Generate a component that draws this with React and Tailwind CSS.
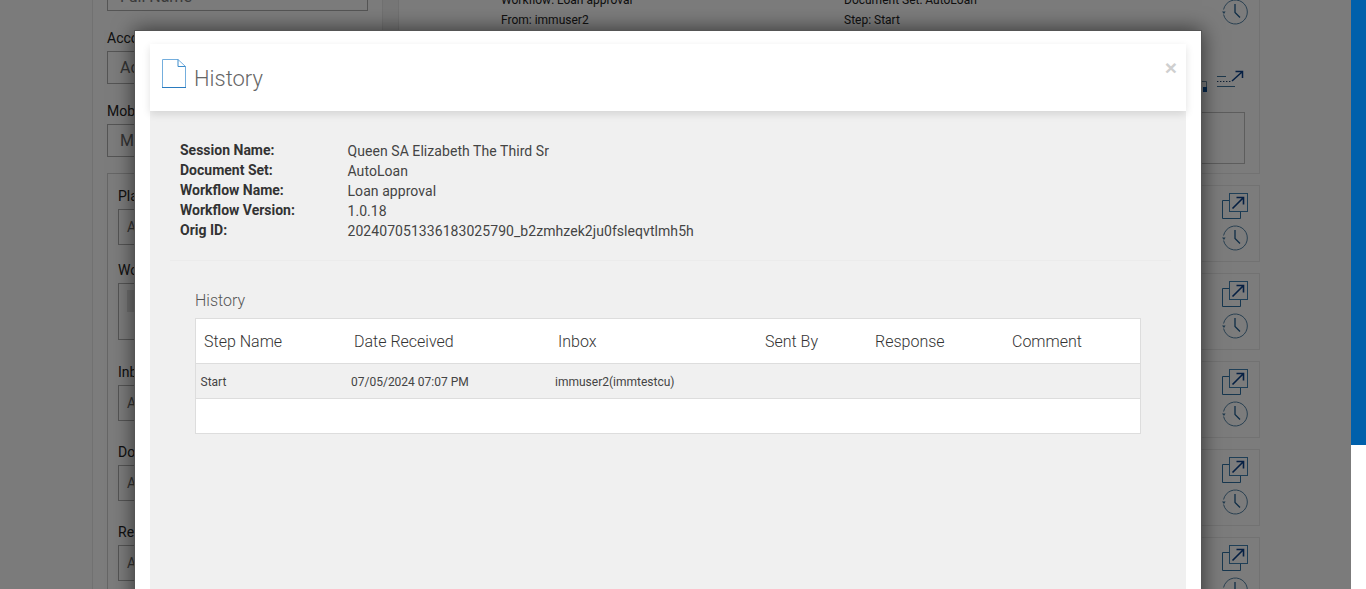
import React from "react";

const roboto = { fontFamily: "Roboto, sans-serif" };

function ExportIcon() {
  return (
    <svg width="26" height="26" viewBox="0 0 26 26" fill="none" className="block">
      <path d="M7 7.5H0.5V25.5H18.5V18.5" stroke="#2f6f9f" strokeWidth="1" />
      <rect x="7.5" y="0.5" width="18" height="18" stroke="#3f7fae" strokeWidth="1" />
      <path d="M10.5 15.5L21.5 4.5M14.5 4.5H21.5V11.5" stroke="#0b3f86" strokeWidth="1.6" />
    </svg>
  );
}

function ClockIcon() {
  return (
    <svg width="26" height="26" viewBox="0 0 26 26" fill="none" className="block">
      <path d="M1.6 10.5A12 12 0 1 1 1.6 15.5" stroke="#3f7399" strokeWidth="0.9" />
      <path d="M0 12.5L2 15L3.6 12.5Z" fill="#3f7399" />
      <path d="M13 5V13.5L18 18.5" stroke="#1e5a8c" strokeWidth="1.3" />
    </svg>
  );
}

function DocIcon() {
  return (
    <svg width="24" height="29" viewBox="0 0 24 29" fill="none" className="block">
      <path d="M0.5 28.5V0.5H16L23.5 7.5V28.5" stroke="#74aedd" strokeWidth="1" />
      <path d="M16 0.5V7.5H23.5" stroke="#3d8ccb" strokeWidth="1" />
      <path d="M0 28.5H24" stroke="#2a7bbf" strokeWidth="1" />
    </svg>
  );
}

function ExportLine() {
  return (
    <svg width="28" height="18" viewBox="0 0 28 18" fill="none" className="block">
      <path d="M1 6.5H10M1 16.5H19" stroke="#3f7399" strokeWidth="1" />
      <path d="M1 11.5H16" stroke="#1c3f66" strokeWidth="1" strokeDasharray="1.4 1.6" />
      <path d="M16 11L26 2M19.5 1.5H26.5V8" stroke="#0b3f86" strokeWidth="1.5" />
    </svg>
  );
}

function LockedDoc() {
  return (
    <svg width="18" height="12" viewBox="0 0 18 12" fill="none" className="block mt-[11px] mr-[9px]">
      <path d="M0 0.5H17.5V6" stroke="#6d8ba3" strokeWidth="1" />
      <rect x="14" y="6" width="4" height="5" fill="#0b4f96" />
    </svg>
  );
}

function Field({ label, placeholder, labelClass, inputClass }) {
  return (
    <div>
      <div className={`text-[14px] leading-[20px] text-[#222] ${labelClass}`}>{label}</div>
      <div className={`border border-[#aaa] flex items-center text-[#666] ${inputClass}`}>{placeholder}</div>
    </div>
  );
}

function IconCard() {
  return (
    <div className="h-[77px] shrink-0 border border-[#e4e4e4] flex flex-col items-end pr-[11px] pt-[7px] gap-[6px]">
      <ExportIcon />
      <ClockIcon />
    </div>
  );
}

function Background() {
  return (
    <div className="flex-1 min-w-0 h-full flex bg-[#f6f6f6] overflow-hidden">
      <div className="w-[92px] shrink-0" />
      <div className="w-[291px] shrink-0 border-x border-[#e2e2e2] bg-[#f8f8f8] px-[14px] -mt-[22px] h-[640px]">
        <div className="h-[33px] border border-[#aaa] flex items-center pl-[12px] pt-[5px] text-[16px] text-[#777]">Full Name</div>
        <div className="mt-[17px]">
          <Field label="Account" placeholder="Ac" labelClass="" inputClass="h-[33px] mt-[3px] pl-[12px] text-[16px]" />
        </div>
        <div className="mt-[17px]">
          <Field label="Mobile" placeholder="Mo" labelClass="" inputClass="h-[33px] mt-[3px] pl-[12px] text-[16px]" />
        </div>
        <div className="mt-[16px] border border-[#ccc] px-[10px] pt-[12px] h-[440px]">
          <Field label="Plan" placeholder="A" inputClass="h-[36px] mt-[3px] pl-[8px] text-[14px]" />
          <div className="mt-[15px]">
            <div className="text-[14px] leading-[20px] text-[#222]">Workflow</div>
            <div className="h-[57px] mt-[3px] border border-[#aaa] pl-[8px] pt-[6px]">
              <div className="h-[22px] w-[60px] bg-[#ddd]" />
            </div>
          </div>
          <div className="mt-[22px]">
            <Field label="Inbox" placeholder="A" inputClass="h-[36px] mt-[3px] pl-[8px] text-[14px]" />
          </div>
          <div className="mt-[21px]">
            <Field label="Document Set" placeholder="A" inputClass="h-[36px] mt-[3px] pl-[8px] text-[14px]" />
          </div>
          <div className="mt-[21px]">
            <Field label="Received" placeholder="A" inputClass="h-[36px] mt-[3px] pl-[8px] text-[14px]" />
          </div>
        </div>
      </div>
      <div className="w-[15px] shrink-0 bg-[#eeeeee]" />
      <div className="w-[862px] shrink-0 border-l border-[#e2e2e2] bg-[#f8f8f8] flex flex-col gap-[11px] -mt-[22px] h-[640px]">
        <div className="h-[196px] shrink-0 border border-[#e4e4e4] border-l-0 relative">
          <div className="flex justify-between pr-[11px]">
            <div className="pl-[102px] pt-[11px] grid grid-cols-[343px_1fr] text-[12px] leading-[20px] text-[#222] flex-1">
              <div>Workflow: Loan approval</div>
              <div>Document Set: AutoLoan</div>
              <div>From: immuser2</div>
              <div>Step: Start</div>
            </div>
            <div className="pt-[20px]">
              <ClockIcon />
            </div>
          </div>
          <div className="flex justify-end pr-[15px] mt-[40px]">
            <LockedDoc />
            <ExportLine />
          </div>
          <div className="h-[52px] ml-[14px] mr-[14px] mt-[19px] border border-[#bbb]" />
        </div>
        <IconCard />
        <IconCard />
        <IconCard />
        <IconCard />
        <IconCard />
      </div>
      <div className="flex-1" />
    </div>
  );
}

const headers = [
  ["Step Name", "w-[150px]"],
  ["Date Received", "w-[204px]"],
  ["Inbox", "w-[207px]"],
  ["Sent By", "w-[110px]"],
  ["Response", "w-[137px]"],
  ["Comment", "flex-1"],
];

const details = [
  ["Session Name:", "Queen SA Elizabeth The Third Sr"],
  ["Document Set:", "AutoLoan"],
  ["Workflow Name:", "Loan approval"],
  ["Workflow Version:", "1.0.18"],
  ["Orig ID:", "20240705133618302579" + "0_b2zmhzek2ju0fsleqvtlmh5h"],
];

function Modal() {
  return (
    <div
      className="absolute left-[134px] top-[30px] w-[1068px] h-[600px] bg-white border border-[#555] px-[15px] pt-[13px] shadow-[0_0_20px_rgba(0,0,0,0.6)]"
      style={roboto}
    >
      <div className="h-full bg-[#f0f0f0]">
        <div className="h-[67px] bg-white shadow-[0_3px_8px_rgba(0,0,0,0.12)] flex items-start pl-[12px] pt-[15px] relative">
          <DocIcon />
          <div className="ml-[8px] mt-[4px] text-[22px] leading-[32px] font-light text-[#666]">History</div>
          <div className="absolute right-[9px] top-[12px] text-[21px] leading-[24px] font-bold text-[#cfcfcf]" style={{ fontFamily: "'Liberation Sans', sans-serif" }}>×</div>
        </div>
        <div className="pt-[29px] pl-[30px]">
          {details.map(([k, v]) => (
            <div key={k} className="flex h-[20px] text-[14px] leading-[20px]">
              <div className="w-[167.5px] font-bold text-[#333]">{k}</div>
              <div className="text-[#444] pt-px tracking-[0.06px]">{v}</div>
            </div>
          ))}
        </div>
        <div className="mt-[20px] ml-[20px] mr-[15px] h-px bg-[#ebebeb]" />
        <div className="px-[45px] pt-[30px]">
          <div className="text-[16px] leading-[20px] font-light text-[#555]">History</div>
          <div className="mt-[7px] border border-[#dddddd] bg-white">
            <div className="flex h-[44px] items-center pl-[8px] pt-px text-[16px] font-light text-[#333]">
              {headers.map(([h, w]) => (
                <div key={h} className={w}>{h}</div>
              ))}
            </div>
            <div className="flex h-[36px] items-center pl-[4.5px] pt-px bg-[#f0f0f0] border-y border-[#dddddd] text-[12px] text-[#444]">
              <div className="w-[150.5px]">Start</div>
              <div className="w-[204px]">07/05/2024 07:07 PM</div>
              <div>immuser2(immtestcu)</div>
            </div>
            <div className="h-[34px]" />
          </div>
        </div>
      </div>
    </div>
  );
}

export default function App() {
  return (
    <div className="flex h-[589px] w-[1366px] overflow-hidden" style={roboto}>
      <div className="relative flex-1 min-w-0 h-full overflow-hidden">
        <Background />
        <div className="absolute inset-0 bg-black/50" />
        <Modal />
      </div>
      <div className="w-[15px] shrink-0 h-full bg-white">
        <div className="h-[445px] bg-[#0060ab]" />
      </div>
    </div>
  );
}
